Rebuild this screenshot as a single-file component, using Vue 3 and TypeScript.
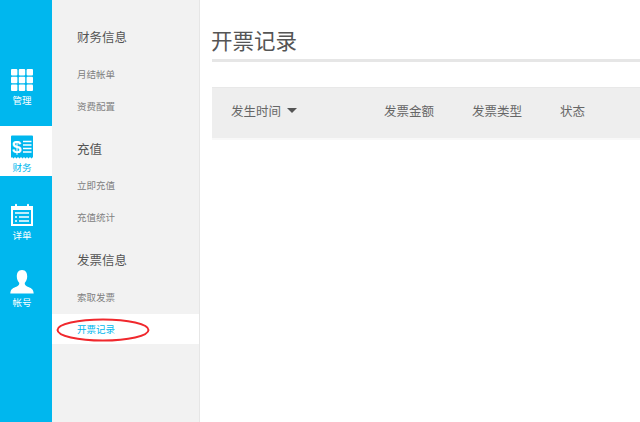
<script setup lang="ts">
const groups = [
  { title: '财务信息', items: ['月结帐单', '资费配置'] },
  { title: '充值', items: ['立即充值', '充值统计'] },
  { title: '发票信息', items: ['索取发票', '开票记录'] },
]
const active = '开票记录'
const columns = ['发票金额', '发票类型', '状态']
</script>

<template>
  <div class="page">
    <nav class="rail">
      <a class="rail-item">
        <svg class="icon" width="24" height="24" viewBox="0 0 24 24" fill="#fff">
          <rect x="1" y="1" width="6.4" height="6.4" rx="1" />
          <rect x="8.8" y="1" width="6.4" height="6.4" rx="1" />
          <rect x="16.6" y="1" width="6.4" height="6.4" rx="1" />
          <rect x="1" y="8.8" width="6.4" height="6.4" rx="1" />
          <rect x="8.8" y="8.8" width="6.4" height="6.4" rx="1" />
          <rect x="16.6" y="8.8" width="6.4" height="6.4" rx="1" />
          <rect x="1" y="16.6" width="6.4" height="6.4" rx="1" />
          <rect x="8.8" y="16.6" width="6.4" height="6.4" rx="1" />
          <rect x="16.6" y="16.6" width="6.4" height="6.4" rx="1" />
        </svg>
        <span>管理</span>
      </a>
      <a class="rail-item current">
        <svg class="icon" width="24" height="24" viewBox="0 0 24 24">
          <path fill="#00b7ee" d="M1 1.5Q1 .5 2 .5H22Q23 .5 23 1.5V22L21.5 23.5 20 22 18.5 23.5 17 22 15.5 23.5 14 22 12.5 23.5 11 22 9.500 23.500 8 22 6.500 23.500 5 22 3.500 23.500 2 22 1 23Z" />
          <text x="2" y="18" class="dollar">$</text>
          <path stroke="#fff" stroke-width="1.500" d="M13 6.500H21.500M13 10H21.500M13 13.500H21.500M13 17H21.500" />
        </svg>
        <span>财务</span>
      </a>
      <a class="rail-item">
        <svg class="icon" width="24" height="24" viewBox="0 0 24 24">
          <path fill="#fff" d="M1 3H5V1.500Q6 .2 7 1.500V3H17V1.500Q18 .2 19 1.500V3H23V23H1Z" />
          <rect x="3" y="7" width="18" height="14" fill="#00b7ee" />
          <path stroke="#fff" stroke-width="1.600" d="M5 10H19M5 14H7M9 14H19M5 18H7M9 18H19" />
        </svg>
        <span>详单</span>
      </a>
      <a class="rail-item">
        <svg class="icon" width="24" height="24" viewBox="0 0 24 24" fill="#fff">
          <path d="M12 0C8 0 6.800 3 6.800 6.500 6.800 9.500 8 11.500 9.300 13 9.300 15.500 8 16 5 17.200 2.500 18.200.5 19.500.3 23.500H23.700C23.500 19.500 21.500 18.200 19 17.200 16 16 14.700 15.500 14.700 13 16 11.500 17.200 9.500 17.200 6.500 17.200 3 16 0 12 0Z" />
        </svg>
        <span>帐号</span>
      </a>
    </nav>

    <aside class="subnav">
      <section v-for="group in groups" :key="group.title" class="group">
        <h3>{{ group.title }}</h3>
        <a v-for="item in group.items" :key="item" class="link" :class="{ on: item === active }">{{ item }}</a>
      </section>
      <svg class="circle" width="96" height="28" viewBox="0 0 96 28">
        <ellipse cx="48" cy="14" rx="45.500" ry="10.500" fill="none" stroke="#f0282d" stroke-width="2" />
      </svg>
    </aside>

    <main class="content">
      <h1>开票记录</h1>
      <div class="thead">
        <div class="col first">发生时间<i class="caret"></i></div>
        <div v-for="c in columns" :key="c" class="col">{{ c }}</div>
      </div>
    </main>
  </div>
</template>

<style>
html, body { margin: 0; background: #fff; overflow: hidden; }
</style>

<style scoped>
.page {
  display: flex;
  width: 640px;
  height: 422px;
  overflow: hidden;
  font-family: "Noto Sans CJK SC", "Liberation Sans", sans-serif;
}
.rail {
  width: 52px;
  flex: none;
  background: #00b7ee;
  padding-top: 59px;
  box-sizing: border-box;
}
.rail-item {
  display: flex;
  flex-direction: column;
  align-items: center;
  height: 50px;
  padding: 9px 8px 0 0;
  margin-bottom: 17.33px;
  box-sizing: border-box;
  color: #fff;
  font-size: 9.500px;
  line-height: 12px;
}
.rail-item.current {
  background: #fff;
  color: #00b7ee;
}
.icon {
  display: block;
  margin-bottom: 2px;
  flex: none;
}
.dollar {
  font: bold 17px "Liberation Sans", sans-serif;
  fill: #fff;
}
.subnav {
  position: relative;
  width: 148px;
  flex: none;
  box-sizing: border-box;
  background: #f2f2f2;
  border-right: 1px solid #e6e6e6;
  padding-top: 20px;
}
.group {
  margin-bottom: 10px;
}
.group h3 {
  margin: 0 0 3.500px;
  padding-left: 25px;
  height: 34px;
  font-size: 12.500px;
  line-height: 34px;
  font-weight: 400;
  color: #555;
}
.link {
  display: block;
  height: 32px;
  padding-left: 25px;
  font-size: 9.500px;
  line-height: 32px;
  color: #808080;
}
.link.on {
  height: 30px;
  margin-top: 1px;
  line-height: 30px;
  background: #fff;
  color: #00b7ee;
}
.circle {
  position: absolute;
  left: 3px;
  top: 316px;
}
.content {
  flex: 1;
  padding: 0 0 0 12px;
  min-width: 0;
}
h1 {
  margin: 0;
  padding-top: 23px;
  height: 36px;
  border-bottom: 3px solid #e6e6e6;
  font-size: 21.500px;
  line-height: 34px;
  font-weight: 400;
  color: #555;
  text-indent: -1px;
}
.thead {
  display: flex;
  align-items: center;
  margin-top: 25px;
  padding: 0 0 5px 19px;
  height: 45px;
  background: #eee;
  border-top: 1px solid #e8e8e8;
  border-bottom: 2px solid #f8f8f8;
  font-size: 12.500px;
  color: #666;
}
.col {
  width: 88px;
  flex: none;
}
.col.first {
  display: flex;
  align-items: center;
  width: 153px;
}
.caret {
  width: 0;
  height: 0;
  margin-left: 6px;
  border-left: 5px solid transparent;
  border-right: 5px solid transparent;
  border-top: 5px solid #555;
}
</style>
